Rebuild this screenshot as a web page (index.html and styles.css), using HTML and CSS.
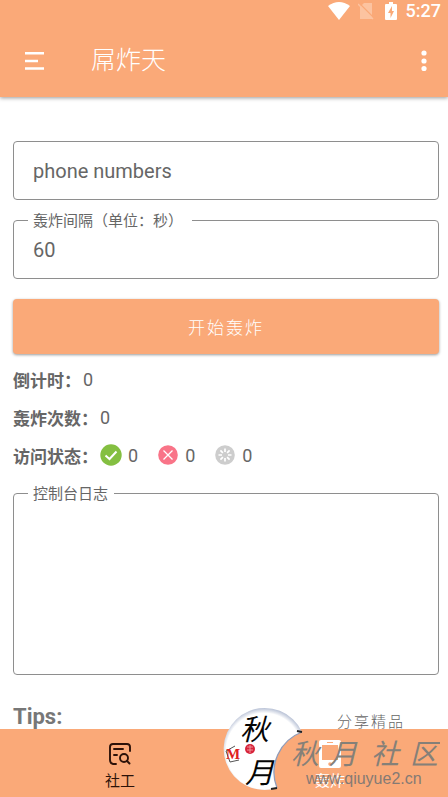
FILE: index.html
```html
<!DOCTYPE html>
<html lang="zh-CN">
<head>
<meta charset="utf-8">
<meta name="viewport" content="width=device-width, initial-scale=1">
<title>屌炸天</title>
<link rel="stylesheet" href="styles.css">
</head>
<body>
<div class="app">
  <header class="header">
    <div class="status">
      <svg width="22" height="18" viewBox="0 0 22 18" aria-hidden="true"><path d="M0 4Q11-4 22 4L11 18Z" fill="#fff"/></svg>
      <svg class="sim" width="16" height="18" viewBox="0 0 16 18" aria-hidden="true"><path d="M6 1H14V17H2V5Z" fill="#fcc3a0"/><path d="M1 1L16 16" stroke="#faa978" stroke-width="1.500"/><path d="M0 2L15 17" stroke="#fcc3a0" stroke-width="1.500"/></svg>
      <svg class="battery" width="12" height="18" viewBox="0 0 12 18" aria-hidden="true"><path d="M4 0H8V2H11Q12 2 12 3V17Q12 18 11 18H1Q0 18 0 17V3Q0 2 1 2H4Z" fill="#fff"/><path d="M7 4L3 11H5.500V16L9 9H7Z" fill="#faa978"/></svg>
      <span class="clock">5:27</span>
    </div>
    <div class="toolbar">
      <button class="icon-button" type="button" aria-label="菜单">
        <svg width="20" height="18" viewBox="0 0 20 18"><path d="M0 1.200H19M0 9H13M0 16.500H19" stroke="#fff" stroke-width="2.400"/></svg>
      </button>
      <h1 class="title">屌炸天</h1>
      <button class="icon-button more" type="button" aria-label="更多">
        <svg width="6" height="22" viewBox="0 0 6 22" fill="#fff"><circle cx="3" cy="3" r="2.600"/><circle cx="3" cy="11" r="2.600"/><circle cx="3" cy="18.500" r="2.600"/></svg>
      </button>
    </div>
  </header>

  <main class="content">
    <div class="field">
      <input class="input" type="text" placeholder="phone numbers" aria-label="phone numbers">
    </div>
    <div class="field">
      <label class="field-label wide" for="interval">轰炸间隔（单位：秒）</label>
      <input class="input" id="interval" type="text" value="60">
    </div>
    <button class="start" type="button">开始轰炸</button>
    <div class="stats">
      <p class="stat"><b>倒计时：</b><span>0</span></p>
      <p class="stat"><b>轰炸次数：</b><span>0</span></p>
      <p class="stat"><b>访问状态：</b>
        <span class="state"><svg width="22" height="22" viewBox="0 0 22 22" aria-hidden="true"><circle cx="11" cy="11" r="10.700" fill="#84bf41"/><path d="M5.500 11.500L9.500 15L16.500 7.500" fill="none" stroke="#fff" stroke-width="2"/></svg>0</span>
        <span class="state"><svg width="22" height="22" viewBox="0 0 22 22" aria-hidden="true"><circle cx="11" cy="11" r="9.800" fill="#f97488"/><path d="M6.500 6.500L15.500 15.500M15.500 6.500L6.500 15.500" stroke="#fff" stroke-width="1.300"/></svg>0</span>
        <span class="state"><svg width="22" height="22" viewBox="0 0 22 22" aria-hidden="true"><circle cx="11" cy="11" r="9.800" fill="#cdcdcd"/><path d="M11 4.500V8M11 14V17.500M4.500 11H8M14 11H17.500M6.400 6.400L8.900 8.900M13.100 13.100L15.600 15.600M15.600 6.400L13.100 8.900M8.900 13.100L6.400 15.600" stroke="#fff" stroke-width="1.700"/></svg>0</span>
      </p>
    </div>
    <div class="field">
      <label class="field-label" for="log">控制台日志</label>
      <textarea class="input log" id="log" readonly></textarea>
    </div>
    <h2 class="tips">Tips:</h2>
  </main>

  <nav class="nav">
    <a class="nav-item" href="#search">
      <svg width="24" height="28" viewBox="0 0 24 28" fill="none" stroke="#2c1209" stroke-width="1.900" stroke-linecap="round"><path d="M22 11V7Q22 4 19 4H5Q2 4 2 7V20Q2 23.500 5 24H8M6 9H15M6 15H9"/><circle cx="16" cy="18" r="4"/><path d="M19 21L21.500 23.500"/></svg>
      <span>社工</span>
    </a>
    <a class="nav-item active" href="#start">
      <svg width="22" height="28" viewBox="0 0 22 28"><path fill="#fff" fill-rule="evenodd" d="M2 0H20Q22 0 22 2V26Q22 28 20 28H2Q0 28 0 26V2Q0 0 2 0ZM3 5V20H19V5ZM8 2V3H14V2ZM11 22.300A1.800 1.800 0 1 0 11 25.900A1.800 1.800 0 1 0 11 22.300Z"/></svg>
      <span>轰炸</span>
    </a>
  </nav>

  <svg class="watermark" width="220" height="93" viewBox="0 0 220 93" aria-hidden="true">
    <defs>
      <radialGradient id="moon" gradientUnits="userSpaceOnUse" cx="44" cy="47" r="43">
        <stop offset=".88" stop-color="#fff"/><stop offset="1" stop-color="#b9c2d6"/>
      </radialGradient>
    </defs>
    <path d="M82 28A41 41 0 1 0 57 84A43 43 0 0 1 82 28Z" fill="url(#moon)"/>
    <path d="M82 28A43 43 0 0 0 57 84" fill="none" stroke="#8f9cba" stroke-width="1.300"/>
    <path d="M82 28L77 27M57 84L51 85" stroke="#222" stroke-width="2"/>
    <g class="brush"><text x="20" y="36">秋</text><text x="25" y="79">月</text></g>
    <path d="M15 42L6 47L10 58L19 56" fill="none" stroke="#555"/>
    <text class="mark" x="6" y="55">M</text>
    <circle cx="30" cy="45" r="5" fill="#d7233a"/>
    <path d="M27 43H33M27 46H33M30 41V49" stroke="#f3a9ae" stroke-width=".8"/>
    <text class="slogan" x="117 134 151 168" y="23">分享精品</text>
    <text class="community" x="71 109 151 190" y="60">秋月社区</text>
    <text class="site" x="86" y="80">www.qiuyue2.cn</text>
  </svg>
</div>
</body>
</html>
```
FILE: styles.css
```css
* {
  box-sizing: border-box;
}

body {
  margin: 0;
  background: #fff;
  color: #666;
  font-family: Roboto, "Noto Sans CJK SC", sans-serif;
}

button {
  border: 0;
  padding: 0;
  background: none;
  font-family: inherit;
}

svg {
  display: block;
  flex: none;
}

.app {
  position: relative;
  display: flex;
  flex-direction: column;
  height: 100vh;
  overflow: hidden;
}

.header {
  flex: none;
  background: #faa978;
  color: #fff;
  box-shadow: 0 1px 4px rgba(0, 0, 0, .4);
}

.status {
  display: flex;
  align-items: center;
  justify-content: flex-end;
  height: 22px;
  padding: 0 7px;
}

.sim {
  margin-left: 8px;
}

.battery {
  margin-left: 11px;
}

.clock {
  margin-left: 9px;
  font-size: 18px;
  font-weight: 500;
  line-height: 22px;
}

.toolbar {
  display: flex;
  align-items: center;
  height: 75px;
  padding: 2px 21px 0 25px;
}

.icon-button {
  display: flex;
}

.title {
  margin: 0 0 0 46px;
  font-size: 25px;
  line-height: 32px;
  font-weight: 300;
}

.more {
  margin-left: auto;
}

.content {
  flex: 1;
  min-height: 0;
  overflow: hidden;
  padding: 44px 9px 0 13px;
}

.field {
  position: relative;
  margin-bottom: 20px;
}

.field-label {
  position: absolute;
  top: -9px;
  left: 15px;
  padding: 0 6px 0 5px;
  background: #fff;
  font-size: 15px;
  line-height: 20px;
}

.wide {
  padding-right: 9px;
}

.input {
  display: block;
  width: 100%;
  height: 59px;
  padding: 0 19px;
  border: 1px solid #8e8e8e;
  border-radius: 4px;
  outline: 0;
  background: #fff;
  color: #666;
  font-family: inherit;
  font-size: 20px;
}

.input::placeholder {
  color: #666;
  opacity: 1;
}

.log {
  height: 182px;
  padding: 18px 19px;
  resize: none;
}

.start {
  display: block;
  width: 100%;
  height: 55px;
  border-radius: 4px;
  background: #faa978;
  color: #fff;
  font-size: 17px;
  font-weight: 300;
  letter-spacing: 2px;
  box-shadow: 0 1px 3px rgba(0, 0, 0, .4);
}

.stats {
  padding: 6px 0 19px;
}

.stat {
  display: flex;
  align-items: center;
  height: 38px;
  margin: 0;
  font-size: 18px;
}

.stat b {
  margin-right: 2px;
  font-size: 17px;
  font-weight: 700;
}

.state {
  display: flex;
  align-items: center;
  gap: 6px;
  margin-right: 19px;
}

.tips {
  margin: 28px 0 0;
  color: #777;
  font-size: 22px;
  line-height: 28px;
}

.nav {
  display: flex;
  flex: none;
  height: 68px;
  padding: 0 13px 0 15px;
  background: #faa978;
}

.nav-item {
  display: flex;
  flex: 1;
  flex-direction: column;
  align-items: center;
  gap: 2px;
  padding-top: 11px;
  color: #2c1209;
  font-size: 15px;
  line-height: 22px;
  text-decoration: none;
}

.active {
  color: #fff;
}

.watermark {
  position: absolute;
  right: 8px;
  bottom: 0;
  pointer-events: none;
  font-family: "Noto Sans CJK SC", sans-serif;
}

.brush {
  fill: #050505;
  font-size: 29px;
  font-style: italic;
  font-weight: 400;
}

.mark {
  fill: #e02020;
  font-family: "Liberation Serif", serif;
  font-size: 15px;
  font-weight: 700;
}

.slogan {
  fill: #666;
  font-size: 15px;
  font-weight: 300;
}

.community {
  fill: #858078;
  font-size: 28px;
  font-style: italic;
  font-weight: 400;
}

.site {
  fill: #857a74;
  font-family: "Liberation Sans", sans-serif;
  font-size: 16px;
}
```
